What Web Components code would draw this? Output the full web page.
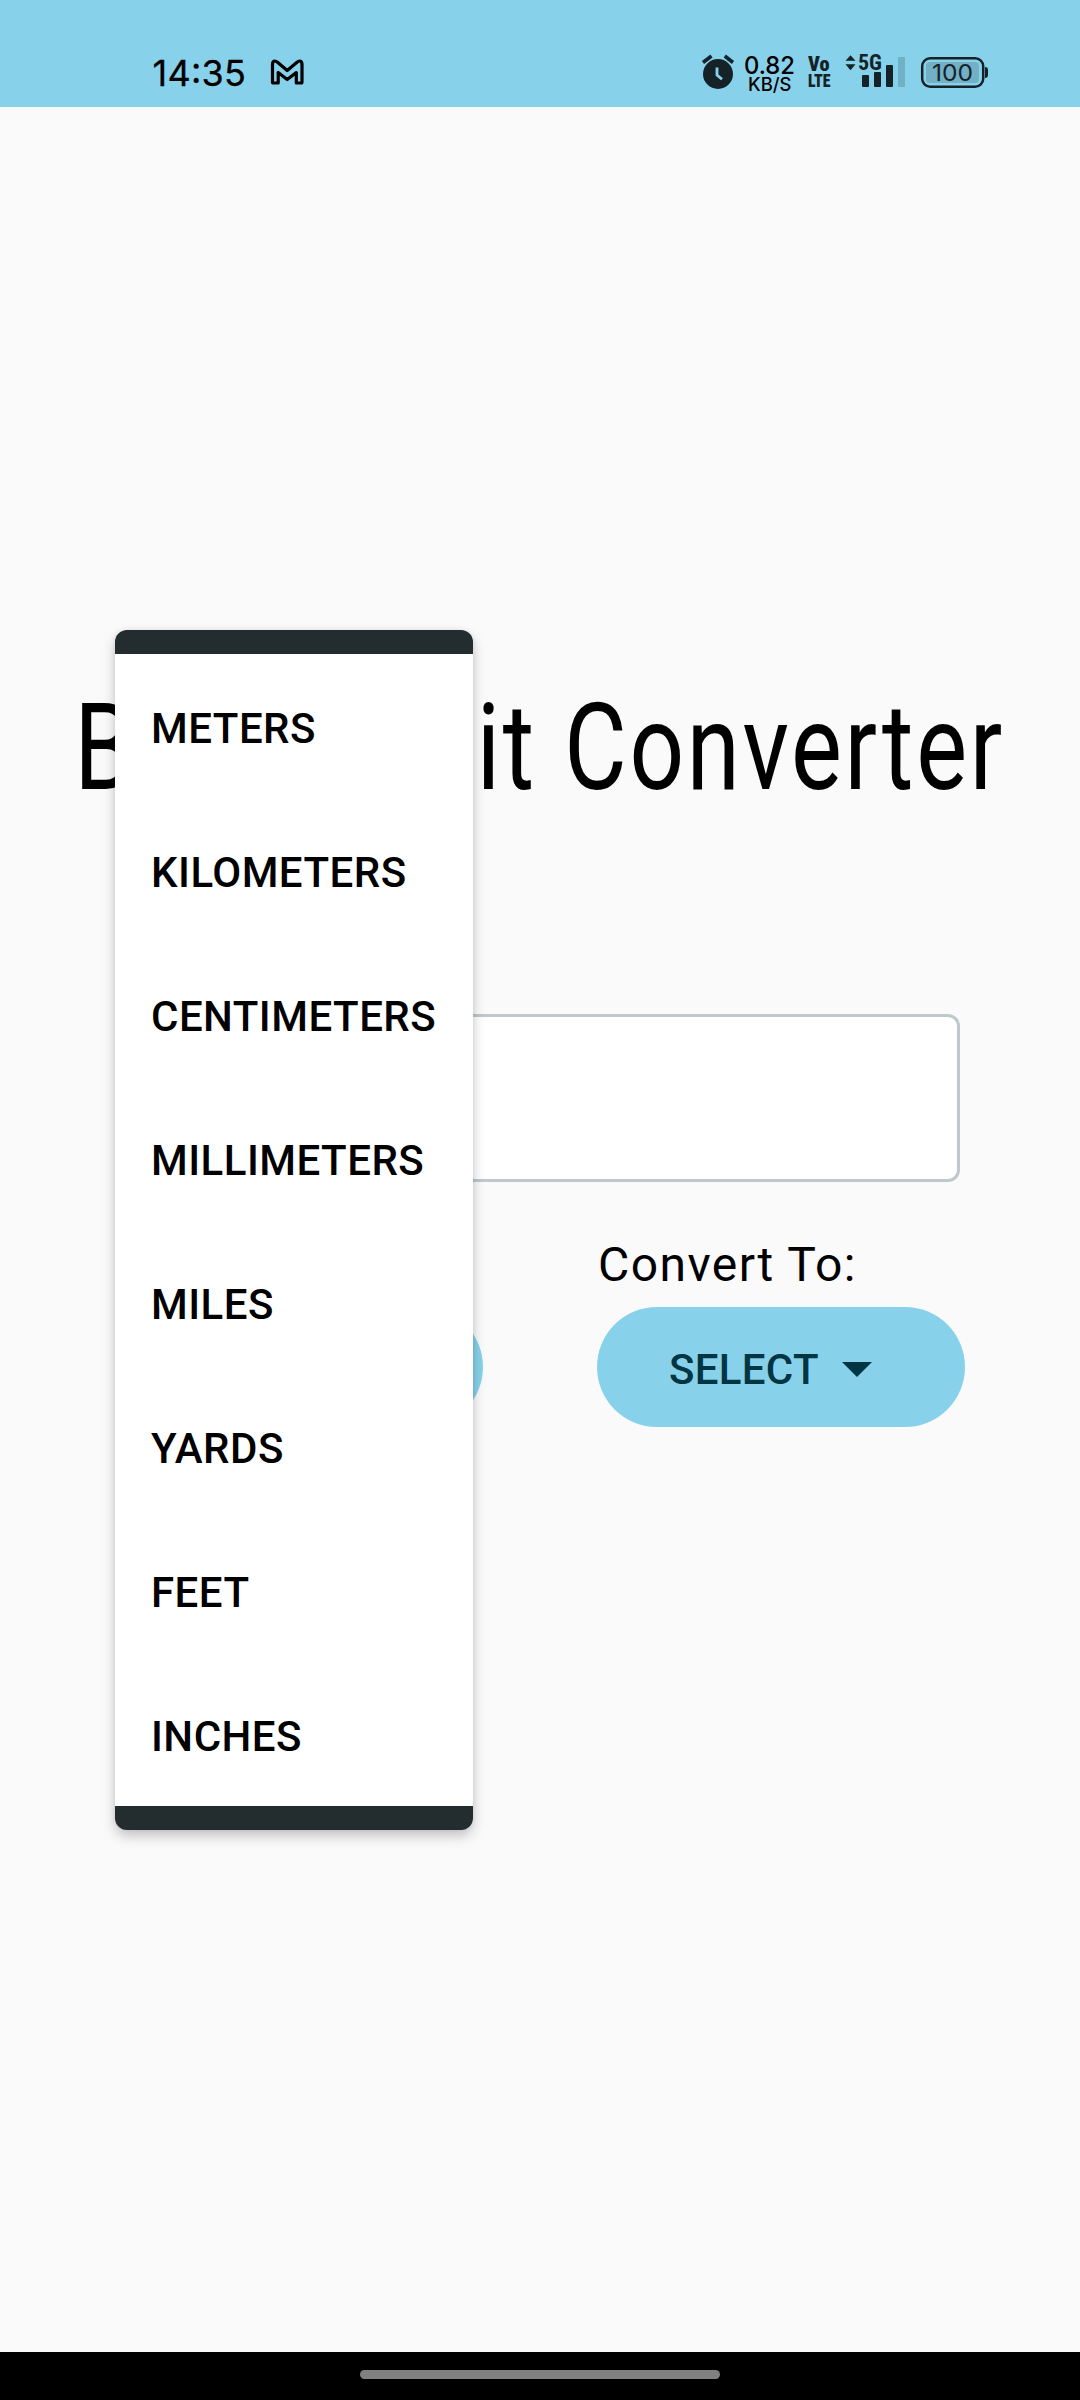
<!DOCTYPE html>
<html lang="en">
<head>
<meta charset="utf-8">
<title>Basic Unit Converter</title>
<style>
html,body{margin:0;padding:0}
body{width:1080px;height:2400px;overflow:hidden;background:#fafafa;font-family:Roboto,"Liberation Sans",sans-serif;color:#000}
</style>
</head>
<body>
<converter-app></converter-app>
<script>
const define = (name, html) => {
  const t = document.createElement('template');
  t.innerHTML = html;
  customElements.define(name, class extends HTMLElement {
    constructor() {
      super();
      this.attachShadow({mode: 'open'}).append(t.content.cloneNode(true));
    }
  });
};

define('status-bar', `
<style>
:host{display:flex;justify-content:space-between;height:107px;background:#88d1ea;padding:0 88px 0 150px;box-sizing:border-box}
div{display:flex}
svg{display:block;height:107px;overflow:visible}
text{font-family:Inter,"Liberation Sans",sans-serif}
.r{font-family:Roboto,"Liberation Sans",sans-serif;font-stretch:75%}
</style>
<div>
  <svg width="120" viewBox="150 0 120 107"><text x="152.500" y="86" font-size="36" textLength="93.500" stroke="#000" stroke-width=".3">14:35</text></svg>
  <svg width="40" viewBox="270 0 40 107"><path d="M272.500 64.500Q272.500 61 275 61Q276 61 277.500 62.300L287.200 70.500L297 62.300Q298.500 61 299.500 61Q302 61 302 64.500V82Q302 83 301 83H296.300V72.500L287.200 79.500L278.200 72.500V83H273.500Q272.500 83 272.500 82Z" fill="none" stroke="#000" stroke-width="3.200" stroke-linejoin="round"/></svg>
</div>
<div>
  <svg width="42" viewBox="700 0 42 107">
    <circle cx="718" cy="74" r="15" fill="#152329"/>
    <path d="M703 62.500L711.500 56M724.800 56L733 62.500" stroke="#152329" stroke-width="3.600"/>
    <path d="M717 67.500V75L722 79.200" fill="none" stroke="#88d1ea" stroke-width="2.800"/>
  </svg>
  <svg width="64" viewBox="742 0 64 107">
    <text x="744" y="73.500" font-size="24.500" font-weight="550" textLength="51" lengthAdjust="spacingAndGlyphs">0.82</text>
    <text x="748" y="90.500" font-size="18.500" font-weight="550" textLength="43.500" lengthAdjust="spacingAndGlyphs">KB/S</text>
  </svg>
  <svg width="38" viewBox="806 0 38 107" fill="#152329">
    <text class="r" x="808" y="71.300" font-size="19.800" font-weight="900" textLength="21.500" lengthAdjust="spacingAndGlyphs">Vo</text>
    <text class="r" x="808" y="86.500" font-size="19" font-weight="900" textLength="22.500" lengthAdjust="spacingAndGlyphs">LTE</text>
  </svg>
  <svg width="74" viewBox="844 0 74 107" fill="#152329">
    <path d="M850.500 55.300L855.500 60.700H845.500ZM850.500 70.200L855.500 64.300H845.500Z"/>
    <text class="r" x="858" y="70" font-size="21.500" font-weight="700" textLength="24" lengthAdjust="spacingAndGlyphs">5G</text>
    <rect x="862" y="75" width="7" height="12" rx="1"/><rect x="874" y="72" width="7" height="15" rx="1"/><rect x="886" y="65" width="7" height="22" rx="1"/><rect x="898" y="57" width="7" height="30" rx="1" fill="#71b0c5"/>
  </svg>
  <svg width="74" viewBox="918 0 74 107">
    <rect x="922.200" y="58.200" width="61" height="28.600" rx="8" fill="none" stroke="#152329" stroke-width="2.500"/>
    <rect x="926" y="62" width="53" height="21" rx="4" fill="#71b0c5"/>
    <path d="M985 67Q988 67 988 70V75Q988 78 985 78Z" fill="#152329"/>
    <text x="932" y="81" font-size="23.500" textLength="41" lengthAdjust="spacingAndGlyphs" fill="#152329">100</text>
  </svg>
</div>`);

define('select-button', `
<style>
:host{display:flex;align-items:center;box-sizing:border-box;width:368px;height:120px;border-radius:60px;background:#88d1ea;padding:4px 0 0 72px;color:#003543;font:500 42px/49px Roboto,"Liberation Sans",sans-serif;gap:23px;letter-spacing:.3px}
svg{display:block}
</style><slot></slot><svg width="30" height="15" viewBox="0 0 30 15"><path d="M0 0H30L15 15Z" fill="#003543"/></svg>`);

define('unit-field', `
<style>
:host{display:flex;flex-direction:column;width:368px}
label{display:block;height:84px;box-sizing:border-box;padding:14px 0 0 1px;font-size:48px;line-height:56px;letter-spacing:1.44px;white-space:nowrap}
</style><label><slot name="label"></slot></label><select-button><slot></slot></select-button>`);

define('menu-item', `
<style>
:host{display:flex;align-items:center;height:144px;padding:4px 36px 0;box-sizing:border-box;background:#fff;font-size:42px;font-weight:500;line-height:49px;letter-spacing:.48px;white-space:nowrap}
</style><slot></slot>`);

define('unit-menu', `
<style>
:host{display:block;box-sizing:border-box;width:358px;border-radius:12px;background:#232c2f;padding:24px 0;box-shadow:0 6px 13px rgba(0,0,0,.22),0 0 5px rgba(0,0,0,.07)}
</style><slot></slot>`);

define('nav-bar', `
<style>
:host{display:flex;justify-content:center;height:48px;background:#000;padding-top:18px;box-sizing:border-box}
i{width:360px;height:9px;border-radius:5px;background:#808080}
</style><i></i>`);

define('converter-app', `
<style>
:host{display:flex;flex-direction:column;height:2400px;position:relative}
main{flex:1;display:flex;flex-direction:column;padding-top:571px}
h1{margin:0;height:141px;width:max-content;align-self:center;font-size:120px;line-height:141px;font-weight:400;white-space:nowrap;letter-spacing:3.3px;word-spacing:1.5px;transform:scaleX(.8)}
h1 span{letter-spacing:4.2px}
.input{box-sizing:border-box;width:840px;height:168px;margin:195px auto 0;border:3px solid #bfc8cc;border-radius:12px;background:#fff}
.row{display:flex;justify-content:space-between;padding:41px 115px 0}
unit-menu{position:absolute;left:115px;top:630px}
</style>
<status-bar></status-bar>
<main>
  <h1><span>Basic Un</span>it Converter</h1>
  <div class="input"></div>
  <div class="row">
    <unit-field></unit-field>
    <unit-field><span slot="label">Convert To:</span>SELECT</unit-field>
  </div>
</main>
<nav-bar></nav-bar>
<unit-menu>
  <menu-item>METERS</menu-item><menu-item>KILOMETERS</menu-item><menu-item>CENTIMETERS</menu-item><menu-item>MILLIMETERS</menu-item><menu-item>MILES</menu-item><menu-item>YARDS</menu-item><menu-item>FEET</menu-item><menu-item>INCHES</menu-item>
</unit-menu>`);
</script>
</body>
</html>
